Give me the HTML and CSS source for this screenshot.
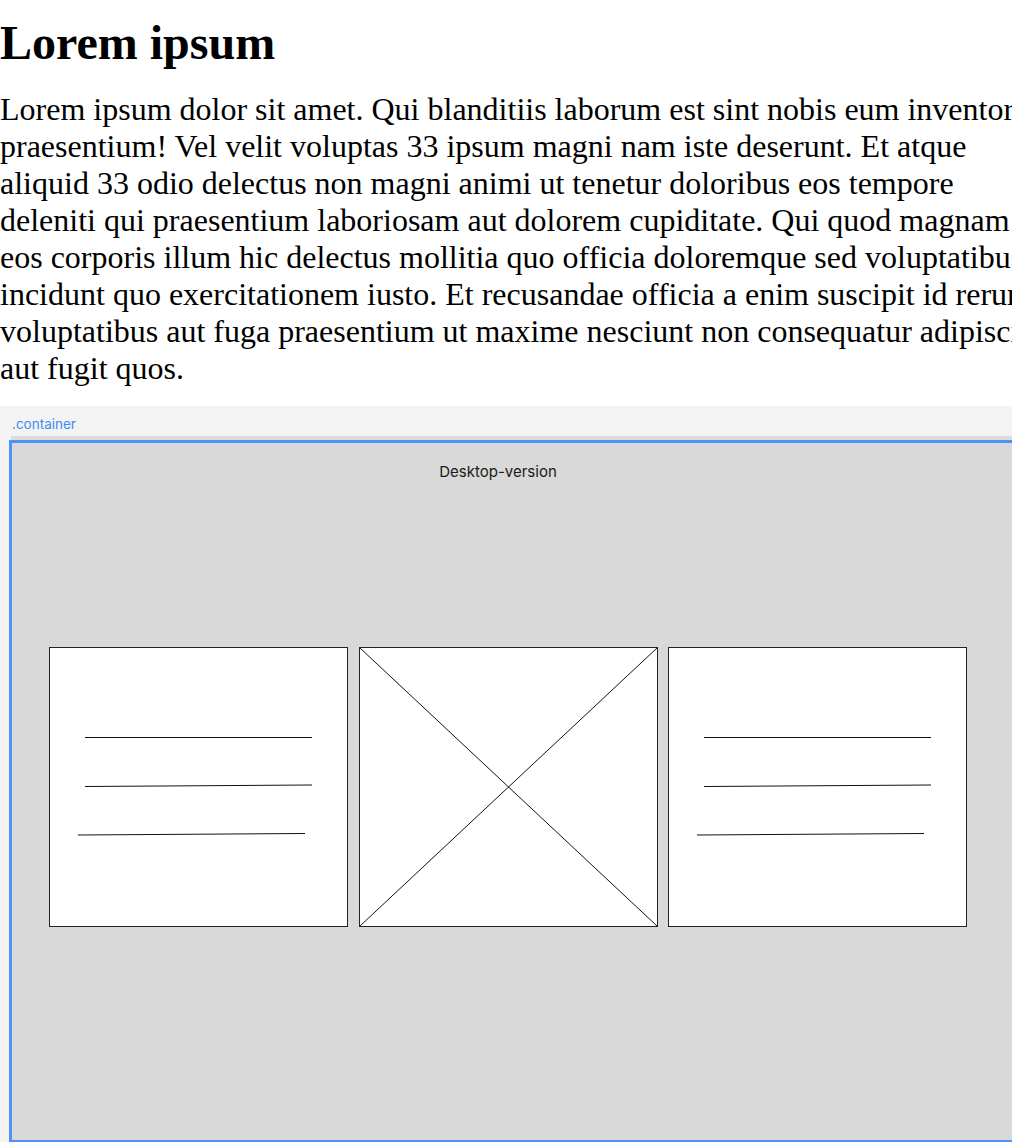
FILE: index.html
```html
<!DOCTYPE html>
<html lang="en">
<head>
<meta charset="utf-8">
<title>Lorem ipsum</title>
<link rel="stylesheet" href="styles.css">
</head>
<body>
<div class="page">
  <h1 class="title">Lorem ipsum</h1>
  <p class="intro">Lorem ipsum dolor sit amet. Qui blanditiis laborum est sint nobis eum inventore praesentium! Vel velit voluptas 33 ipsum magni nam iste deserunt. Et atque aliquid 33 odio delectus non magni animi ut tenetur doloribus eos tempore deleniti qui praesentium laboriosam aut dolorem cupiditate. Qui quod magnam eos corporis illum hic delectus mollitia quo officia doloremque sed voluptatibus incidunt quo exercitationem iusto. Et recusandae officia a enim suscipit id rerum voluptatibus aut fuga praesentium ut maxime nesciunt non consequatur adipisci aut fugit quos.</p>
</div>
<section class="inspector">
  <div class="inspector-label">.container</div>
  <div class="frame">
    <div class="frame-inner">
      <p class="frame-title">Desktop-version</p>
      <div class="cards">
        <div class="card">
          <svg class="card-art" viewBox="0 0 297 278" preserveAspectRatio="none">
            <line x1="35" y1="89.5" x2="262" y2="89.5"/>
            <line x1="35" y1="138.5" x2="262" y2="137"/>
            <line x1="28" y1="187" x2="255" y2="185.5"/>
          </svg>
        </div>
        <div class="card">
          <svg class="card-art" viewBox="0 0 297 278" preserveAspectRatio="none">
            <line x1="0" y1="0" x2="297" y2="278"/>
            <line x1="297" y1="0" x2="0" y2="278"/>
          </svg>
        </div>
        <div class="card">
          <svg class="card-art" viewBox="0 0 297 278" preserveAspectRatio="none">
            <line x1="35" y1="89.5" x2="262" y2="89.5"/>
            <line x1="35" y1="138.5" x2="262" y2="137"/>
            <line x1="28" y1="187" x2="255" y2="185.5"/>
          </svg>
        </div>
      </div>
    </div>
  </div>
</section>
</body>
</html>
```
FILE: styles.css
```css
html, body {
  margin: 0;
  padding: 0;
  overflow-x: hidden;
  background: #ffffff;
}

body {
  font-family: "Liberation Serif", "Times New Roman", serif;
  color: #000;
}

.page {
  width: 1054px;
}

.title {
  font-size: 48px;
  font-weight: 700;
  margin: 15px 0 0;
  line-height: normal;
}

.intro {
  font-size: 32px;
  line-height: normal;
  margin: 21px 0 0;
}

.inspector {
  margin-top: 19px;
  background: #f3f3f3;
  width: 1100px;
  padding-top: 10px;
  font-family: "Inter", "Liberation Sans", sans-serif;
}

.inspector-label {
  margin-left: 12px;
  font-size: 13.5px;
  line-height: 17px;
  color: #3f8cf0;
  height: 24px;
}

.frame {
  margin-left: 9px;
  width: 1070px;
  height: 697px;
  background: #d9d9d9;
  border: 3px solid #4b94f6;
  border-bottom-width: 2px;
  border-right: none;
  box-shadow: 2px -4px 0 #dcdcdc;
}

.frame-inner {
  width: 972px;
}

.frame-title {
  margin: 20px 0 0;
  text-align: center;
  font-size: 15px;
  line-height: 18px;
  color: #1a1a1a;
}

.cards {
  display: flex;
  gap: 10.5px;
  padding-left: 37px;
  margin-top: 166px;
}

.card {
  width: 297px;
  height: 278px;
  background: #ffffff;
  border: 1px solid #222222;
  flex: none;
}

.card-art {
  display: block;
  width: 100%;
  height: 100%;
  stroke: #111111;
  stroke-width: 1;
  fill: none;
}
```
